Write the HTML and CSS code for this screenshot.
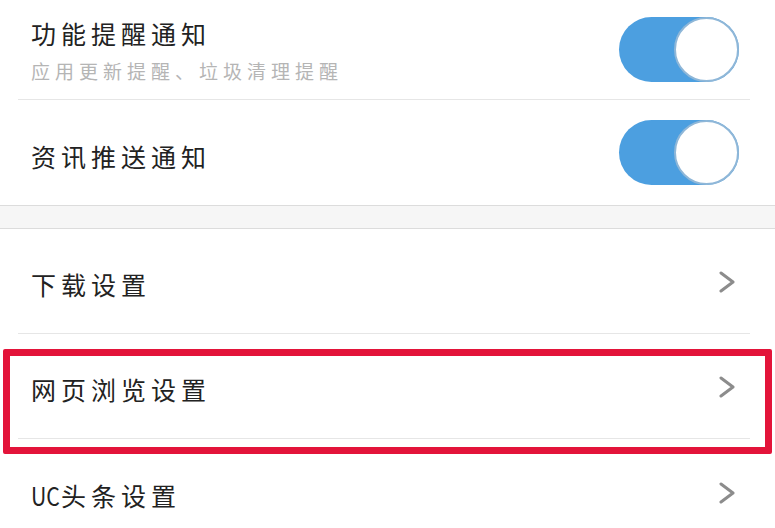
FILE: index.html
```html
<!DOCTYPE html>
<html lang="zh-CN">
<head>
  <meta charset="UTF-8">
  <title>设置</title>
  <meta name="viewport" content="width=device-width, initial-scale=1.0">
  <link rel="stylesheet" href="styles.css">
</head>
<body>
  <div class="group">
    <div class="row row-first">
      <div class="text">
        <div class="label">功能提醒通知</div>
        <div class="sub">应用更新提醒、垃圾清理提醒</div>
      </div>
      <div class="toggle on"><span class="knob"></span></div>
    </div>
    <div class="row row-last">
      <div class="label">资讯推送通知</div>
      <div class="toggle on"><span class="knob"></span></div>
    </div>
  </div>

  <div class="band"></div>

  <div class="group">
    <div class="row link">
      <div class="label">下载设置</div>
      <svg class="chev" width="16" height="22" viewBox="0 0 16 22"><polyline points="2,2 14,11 2,20" fill="none" stroke="#8c8c8c" stroke-width="3" stroke-linecap="round" stroke-linejoin="round"/></svg>
    </div>
    <div class="row link marked">
      <div class="label">网页浏览设置</div>
      <svg class="chev" width="16" height="22" viewBox="0 0 16 22"><polyline points="2,2 14,11 2,20" fill="none" stroke="#8c8c8c" stroke-width="3" stroke-linecap="round" stroke-linejoin="round"/></svg>
      <div class="highlight"></div>
    </div>
    <div class="row link row-last">
      <div class="label"><span class="latin">UC</span>头条设置</div>
      <svg class="chev" width="16" height="22" viewBox="0 0 16 22"><polyline points="2,2 14,11 2,20" fill="none" stroke="#8c8c8c" stroke-width="3" stroke-linecap="round" stroke-linejoin="round"/></svg>
    </div>
  </div>
</body>
</html>
```

FILE: styles.css
```css
body { margin: 0; background: #fff; color: #222; font-family: "Noto Sans CJK SC", "Noto Sans", sans-serif; overflow: hidden; }
.group { background: #fff; }
.row { display: flex; align-items: center; justify-content: space-between; margin: 0 25px 0 18px; padding: 0 11px 0 13px; height: 104px; border-bottom: 1px solid #e6e6e6; box-sizing: content-box; }
.row-first { height: 99px; }
.row-last { border-bottom: none; height: 105px; }
.label { font-size: 25px; line-height: 28px; letter-spacing: 5px; padding-top: 6px; }
.latin { letter-spacing: 0; display: inline-block; transform: scaleX(0.85); transform-origin: left center; margin-right: -4px; }
.text .label { padding-top: 0; }
.sub { font-size: 19px; line-height: 22px; letter-spacing: 5px; color: #b5b5b5; margin-top: 13px; }
.text { padding-top: 2px; }
.toggle { position: relative; width: 120px; height: 65px; border-radius: 33px; background: #4c9fe0; }
.knob { position: absolute; right: 0; top: 0; width: 61px; height: 61px; border-radius: 50%; background: #fff; border: 2px solid #8fb7d8; }
.link { padding-right: 15px; }
.chev { display: block; margin-top: 2px; }
.band { height: 22px; background: #f6f6f6; border-top: 1px solid #dcdcdc; border-bottom: 1px solid #dcdcdc; }
.marked { position: relative; }
.highlight { position: absolute; left: -15px; right: -22px; top: 15px; bottom: -16px; border: 7px solid #e3143a; border-radius: 2px; pointer-events: none; }
```
